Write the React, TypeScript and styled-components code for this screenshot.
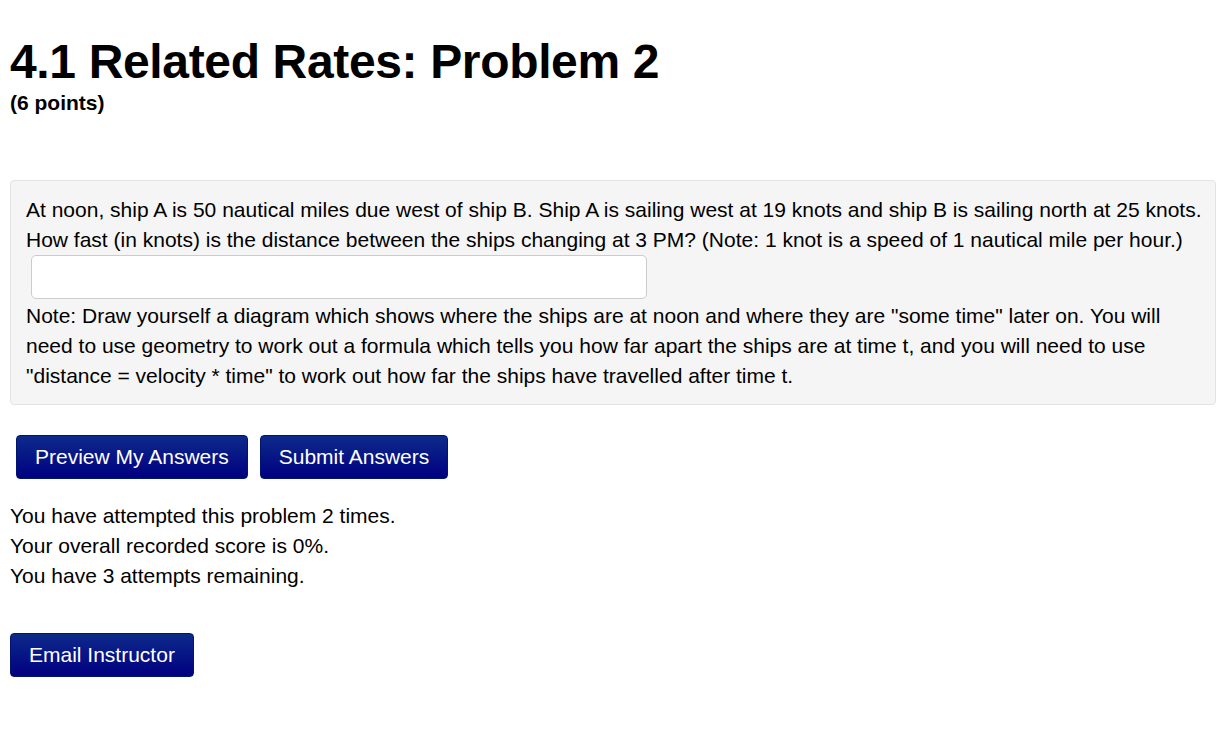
import React from "react";
import styled, { createGlobalStyle } from "styled-components";

const Global = createGlobalStyle`
  html, body { margin: 0; padding: 0; background: #fff; }
  body { font-family: "Liberation Sans", Arial, sans-serif; color: #000; }
`;

const Page = styled.div`
  padding: 0 16px 0 10px;
  font-size: 21px;
  line-height: 30px;
`;

const Title = styled.h1`
  margin: 0;
  padding-top: 36px;
  font-size: 48px;
  line-height: 52px;
  letter-spacing: -0.35px;
  font-weight: bold;
`;

const Points = styled.div`
  font-size: 21px;
  font-weight: bold;
  line-height: 26px;
  margin-top: 2px;
`;

const ProblemBox = styled.div`
  margin-top: 64px;
  background: #f5f5f5;
  border: 1px solid #e3e3e3;
  border-radius: 4px;
  padding: 14px 12px 13px 15px;
`;

const AnswerInput = styled.input`
  display: block;
  box-sizing: border-box;
  width: 616px;
  height: 44px;
  margin: 0 0 2px 5px;
  border: 1px solid #ccc;
  border-radius: 5px;
  background: #fff;
  font-size: 21px;
`;

const ButtonRow = styled.div<{ $indent?: number }>`
  display: flex;
  gap: 12px;
  padding-left: ${(p) => p.$indent ?? 0}px;
`;

const Button = styled.button`
  height: 44px;
  padding: 0 18px;
  border: 1px solid #00156e;
  border-radius: 4px;
  background: linear-gradient(#0d2a8a, #000080);
  color: #fff;
  font-family: "Liberation Sans", Arial, sans-serif;
  font-size: 21px;
  cursor: pointer;
`;

const Actions = styled.div`
  margin-top: 30px;
`;

const Status = styled.div`
  margin-top: 22px;
`;

const EmailWrap = styled.div`
  margin-top: 42px;
`;

export default function App() {
  return (
    <>
      <Global />
      <Page>
        <Title>4.1 Related Rates: Problem 2</Title>
        <Points>(6 points)</Points>
        <ProblemBox>
          At noon, ship A is 50 nautical miles due west of ship B. Ship A is sailing west at 19 knots and ship B is sailing north at 25 knots.
          <br />
          How fast (in knots) is the distance between the ships changing at 3 PM? (Note: 1 knot is a speed of 1 nautical mile per hour.)
          <AnswerInput type="text" aria-label="answer" />
          Note: Draw yourself a diagram which shows where the ships are at noon and where they are "some time" later on. You will need to use geometry to work out a formula which tells you how far apart the ships are at time t, and you will need to use "distance = velocity * time" to work out how far the ships have travelled after time t.
        </ProblemBox>
        <Actions>
          <ButtonRow $indent={6}>
            <Button>Preview My Answers</Button>
            <Button>Submit Answers</Button>
          </ButtonRow>
        </Actions>
        <Status>
          You have attempted this problem 2 times.
          <br />
          Your overall recorded score is 0%.
          <br />
          You have 3 attempts remaining.
        </Status>
        <EmailWrap>
          <ButtonRow>
            <Button>Email Instructor</Button>
          </ButtonRow>
        </EmailWrap>
      </Page>
    </>
  );
}
